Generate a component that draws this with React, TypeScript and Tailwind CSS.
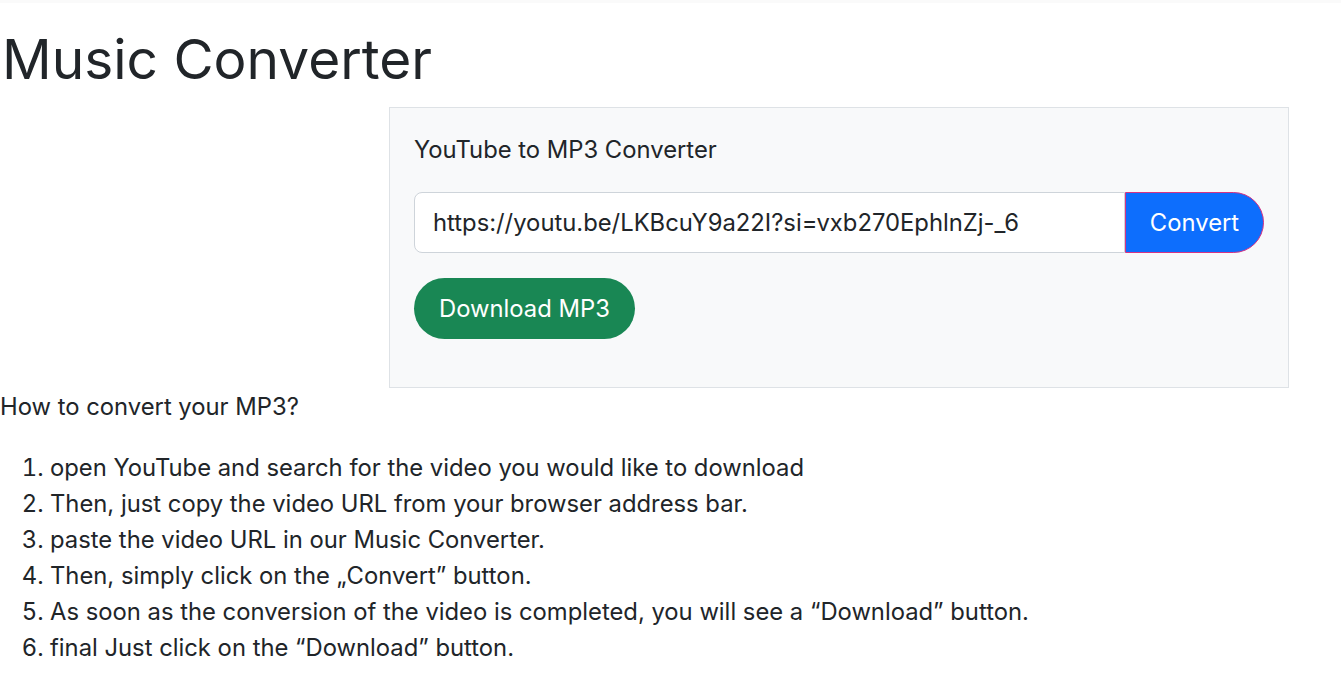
const steps = [
  'open YouTube and search for the video you would like to download',
  'Then, just copy the video URL from your browser address bar.',
  'paste the video URL in our Music Converter.',
  'Then, simply click on the \u201EConvert\u201D button.',
  'As soon as the conversion of the video is completed, you will see a \u201CDownload\u201D button.',
  'final Just click on the \u201CDownload\u201D button.',
];

const App = () => {
  return (
    <div className="min-h-[675px] bg-white text-[#212529] font-['Inter','Liberation_Sans',sans-serif]">
      <div className="h-[3px] bg-[#fafafa]" />
      <h1 className="pt-[23px] pl-[2px] text-[55px] leading-[66px] font-normal">Music Converter</h1>

      <div className="mt-[15px] ml-[389px] w-[900px] border border-[#dee2e6] bg-[#f8f9fa] p-6">
        <p className="text-[23.8px] leading-[36px]">YouTube to MP3 Converter</p>

        <div className="mt-6 flex h-[61px]">
          <input
            type="text"
            readOnly
            value="https://youtu.be/LKBcuY9a22I?si=vxb270EphlnZj-_6"
            className="min-w-0 flex-1 rounded-l-lg border border-[#ced4da] bg-white px-[18px] text-[23.8px] text-[#212529] outline-none"
          />
          <button className="w-[139px] rounded-r-full border border-[#d63384] bg-[#0d6efd] text-[23.8px] text-white">
            Convert
          </button>
        </div>

        <button className="mt-[25px] mb-6 h-[61px] rounded-full bg-[#198754] px-[25px] text-[23.8px] text-white">
          Download MP3
        </button>
      </div>

      <p className="pt-px text-[23.8px] leading-[36px]">How to convert your MP3?</p>

      <ol className="mt-[25px] list-decimal pl-[50px] text-[23.8px] leading-[36px]">
        {steps.map((step) => (
          <li key={step}>{step}</li>
        ))}
      </ol>
    </div>
  );
};

export default App;
